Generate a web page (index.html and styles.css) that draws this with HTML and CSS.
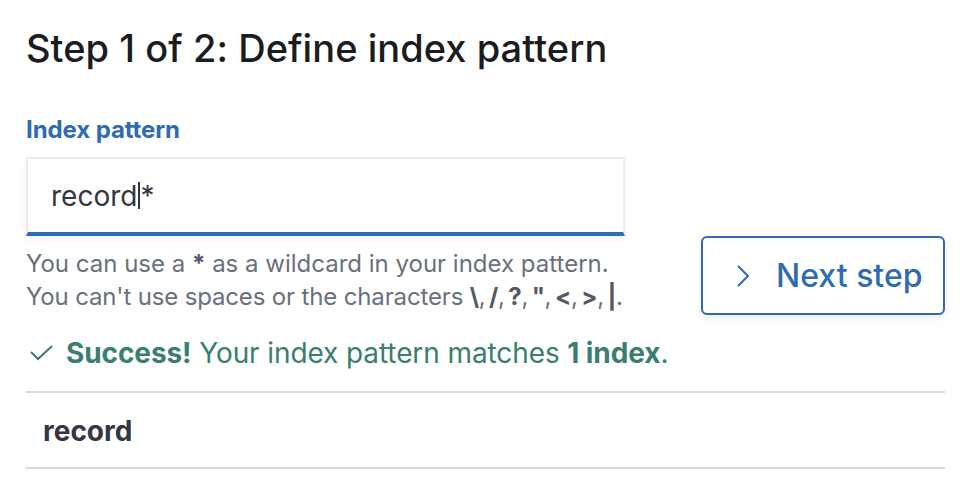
FILE: index.html
```html
<!DOCTYPE html>
<html>
<head>
<meta charset="utf-8">
<link rel="stylesheet" href="styles.css">
</head>
<body>
<div class="page">
  <h1 class="title">Step 1 of 2: Define index pattern</h1>
  <div class="form-row">
    <div class="field">
      <label class="label">Index pattern</label>
      <div class="input"><span class="value">record</span><span class="caret"></span><span class="value">*</span></div>
      <div class="help">
        <div>You can use a <b>*</b> as a wildcard in your index pattern.</div>
        <div class="help-line2">You can't use spaces or the characters <span class="chars"><b>\</b>, <b>/</b>, <b>?</b>, <b>"</b>, <b>&lt;</b>, <b>&gt;</b>, <b>|</b>.</span></div>
      </div>
    </div>
    <div class="action">
      <button class="btn">
        <svg class="chev" width="16" height="24" viewBox="0 0 16 24"><path d="M3 2 L13 12 L3 22" fill="none" stroke="#2f6bb0" stroke-width="2"/></svg>
        <span>Next step</span>
      </button>
    </div>
  </div>
  <div class="success">
    <svg class="check" width="24" height="18" viewBox="0 0 24 18"><path d="M1 7 L8 14 L22 1" fill="none" stroke="#3a7e6f" stroke-width="2"/></svg>
    <span><b>Success!</b> Your index pattern matches <b>1 index</b>.</span>
  </div>
  <div class="list">
    <div class="list-row">record</div>
  </div>
</div>
</body>
</html>
```
FILE: styles.css
```css
* { box-sizing: border-box; }
html, body { margin: 0; padding: 0; background: #fff; }
body { font-family: Inter, "Noto Sans", sans-serif; color: #1a1c21; }
.page { padding: 25px 0 0 26px; width: 945px; }
.title { margin: 0; font-size: 38px; line-height: 46px; font-weight: 500; color: #1a1c21; letter-spacing: 0.05px; }
.form-row { display: flex; align-items: flex-start; justify-content: space-between; margin-top: 44px; }
.field { width: 599px; }
.label { display: block; font-size: 24px; line-height: 30px; font-weight: 700; color: #2f6bb0; letter-spacing: -0.1px; }
.input { margin-top: 12px; height: 79px; border: 2px solid #e8ecf1; border-bottom: 4px solid #2f6bb0; background: #fff; padding: 0 0 0 23px; display: flex; align-items: center; box-shadow: 0 3px 6px rgba(0,0,0,0.06); font-size: 28px; color: #343741; }
.caret { display: inline-block; width: 2px; height: 27px; background: #343741; margin: 0 0 0 1px; }
.help { margin-top: 11px; font-size: 24px; line-height: 33px; color: #69707d; white-space: nowrap; }
.help-line2 { letter-spacing: -0.15px; }
.chars { word-spacing: -2.5px; letter-spacing: -0.4px; }
.help b { color: #535966; font-weight: 700; }
.action { margin-top: 121px; }
.btn { display: flex; align-items: center; width: 244px; height: 79px; border: 2px solid #2f6bb0; border-radius: 6px; background: #fff; padding: 0 0 0 32px; font-family: Inter, "Noto Sans", sans-serif; font-size: 32px; font-weight: 500; color: #2f6bb0; box-shadow: 0 3px 6px rgba(0,0,0,0.08); }
.chev { margin-right: 25px; }
.success { display: flex; align-items: center; margin-top: 20px; font-size: 28px; line-height: 36px; color: #3a7e6f; letter-spacing: -0.1px; }
.check { margin: 2px 12px 0 4px; }
.list { margin-top: 20px; border-top: 2px solid #d3dae6; }
.list-row { border-bottom: 2px solid #d3dae6; padding: 21px 17px 19px; font-size: 28px; line-height: 34px; font-weight: 700; color: #343741; }
```
